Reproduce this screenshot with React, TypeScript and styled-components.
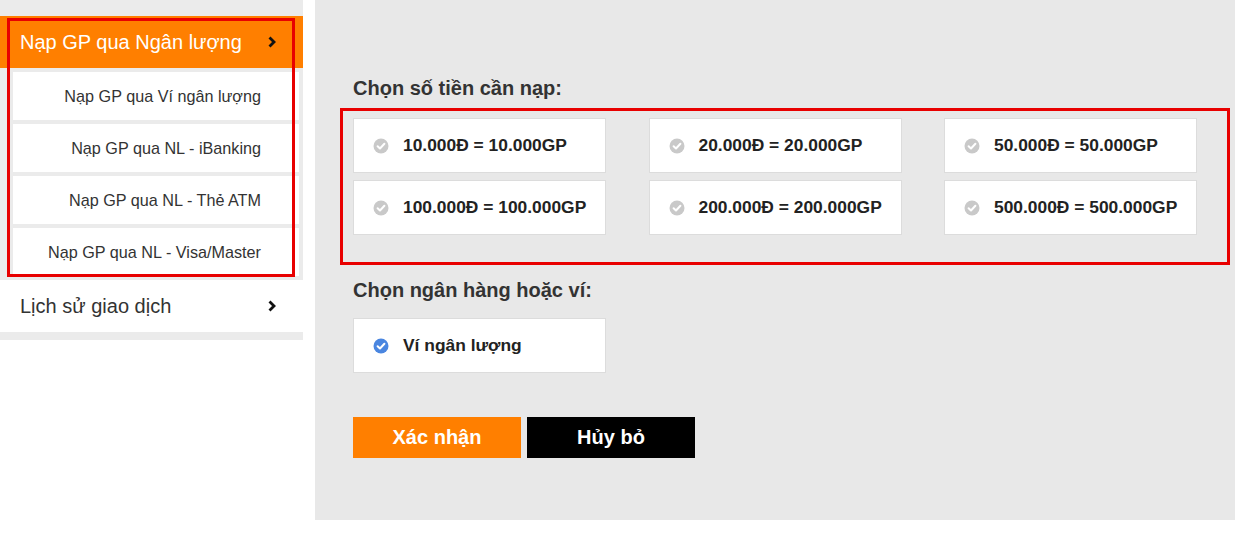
import React, { useState } from 'react';
import styled, { createGlobalStyle } from 'styled-components';

const GlobalStyle = createGlobalStyle`
  body {
    margin: 0;
    background: #fff;
    font-family: "Liberation Sans", Arial, sans-serif;
    color: #333;
  }
`;

const AMOUNTS = [
  '10.000Đ = 10.000GP',
  '20.000Đ = 20.000GP',
  '50.000Đ = 50.000GP',
  '100.000Đ = 100.000GP',
  '200.000Đ = 200.000GP',
  '500.000Đ = 500.000GP',
];

const SUB_ITEMS = [
  'Nạp GP qua Ví ngân lượng',
  'Nạp GP qua NL - iBanking',
  'Nạp GP qua NL - Thẻ ATM',
  'Nạp GP qua NL - Visa/Master',
];

const Chevron = () => (
  <svg width="10" height="14" viewBox="0 0 10 14">
    <polyline points="2.5,2.5 7,7 2.5,11.5" fill="none" stroke="#111" strokeWidth="2.8" />
  </svg>
);

const CheckIcon = ({ active }: { active?: boolean }) => (
  <svg width="16" height="16" viewBox="0 0 16 16">
    <circle cx="8" cy="8" r="7.5" fill={active ? '#4a86e0' : '#c9c9c9'} />
    <polyline
      points="4.6,8.2 7,10.5 11.4,5.8"
      fill="none"
      stroke="#fff"
      strokeWidth="2"
      strokeLinecap="round"
      strokeLinejoin="round"
    />
  </svg>
);

export default function App() {
  const [amount, setAmount] = useState<number | null>(null);

  return (
    <>
      <GlobalStyle />
      <Page>
        <Sidebar>
          <Group>
            <MenuHead>
              <span>Nạp GP qua Ngân lượng</span>
              <Chevron />
            </MenuHead>
            <SubMenu>
              {SUB_ITEMS.map((s) => (
                <SubItem key={s}>{s}</SubItem>
              ))}
            </SubMenu>
          </Group>
          <MenuRow>
            <span>Lịch sử giao dịch</span>
            <Chevron />
          </MenuRow>
        </Sidebar>

        <Main>
          <SectionTitle>Chọn số tiền cần nạp:</SectionTitle>
          <AmountBox>
            <AmountGrid>
              {AMOUNTS.map((a, i) => (
                <Option key={a} onClick={() => setAmount(i)}>
                  <CheckIcon active={amount === i} />
                  <span>{a}</span>
                </Option>
              ))}
            </AmountGrid>
          </AmountBox>

          <SectionTitle $top={13}>Chọn ngân hàng hoặc ví:</SectionTitle>
          <BankRow>
            <Option>
              <CheckIcon active />
              <span>Ví ngân lượng</span>
            </Option>
          </BankRow>

          <Actions>
            <Button $variant="primary">Xác nhận</Button>
            <Button $variant="dark">Hủy bỏ</Button>
          </Actions>
        </Main>
      </Page>
    </>
  );
}

const Page = styled.div`
  display: flex;
  align-items: flex-start;
  width: 1251px;
  gap: 12px;
`;

// Sidebar
const Sidebar = styled.div`
  width: 303px;
  flex-shrink: 0;
  background: #ebebeb;
  padding: 16px 0 8px;
`;

const Group = styled.div`
  position: relative;

  &::after {
    content: '';
    position: absolute;
    top: 2px;
    left: 7px;
    right: 8px;
    bottom: -1px;
    border: 3px solid #e80000;
    pointer-events: none;
  }
`;

const MenuHead = styled.div`
  height: 52px;
  background: #ff7f00;
  color: #fff;
  font-size: 20px;
  display: flex;
  align-items: center;
  justify-content: space-between;
  padding: 0 26px 0 20px;
  box-sizing: border-box;
`;

const SubMenu = styled.div`
  display: flex;
  flex-direction: column;
  gap: 4px;
  padding: 4px 4px 0 13px;
`;

const SubItem = styled.div`
  height: 48px;
  background: #fff;
  font-size: 16.2px;
  color: #333;
  display: flex;
  align-items: center;
  justify-content: flex-end;
  padding-right: 38px;
`;

const MenuRow = styled.div`
  margin-top: 4px;
  height: 52px;
  background: #fff;
  font-size: 20px;
  color: #333;
  display: flex;
  align-items: center;
  justify-content: space-between;
  padding: 0 26px 0 20px;
  box-sizing: border-box;
`;

// Main panel
const Main = styled.div`
  width: 920px;
  height: 520px;
  background: #e8e8e8;
  padding: 76px 0 0 38px;
  box-sizing: border-box;
`;

const SectionTitle = styled.div<{ $top?: number }>`
  font-size: 20px;
  font-weight: bold;
  line-height: 24px;
  color: #333;
  margin-top: ${(p) => p.$top ?? 0}px;
`;

const AmountBox = styled.div`
  margin: 8px 0 0 -13px;
  width: 890px;
  box-sizing: border-box;
  border: 3px solid #e80000;
  padding: 7px 0 27px 10px;
`;

const AmountGrid = styled.div`
  display: grid;
  grid-template-columns: repeat(3, 253px);
  column-gap: 42.5px;
  row-gap: 7px;
`;

const Option = styled.div`
  height: 55px;
  width: 253px;
  box-sizing: border-box;
  background: #fff;
  border: 1px solid #dcdcdc;
  display: flex;
  align-items: center;
  gap: 14px;
  padding-left: 19px;
  font-size: 17.4px;
  font-weight: bold;
  color: #222;
  cursor: pointer;
`;

const BankRow = styled.div`
  margin-top: 16px;
`;

const Actions = styled.div`
  display: flex;
  gap: 6px;
  margin-top: 44px;
`;

const Button = styled.button<{ $variant: 'primary' | 'dark' }>`
  width: 168px;
  height: 41px;
  border: 0;
  background: ${(p) => (p.$variant === 'primary' ? '#ff7f00' : '#000')};
  color: #fff;
  font-family: "Liberation Sans", Arial, sans-serif;
  font-size: 20px;
  font-weight: bold;
  cursor: pointer;
`;
